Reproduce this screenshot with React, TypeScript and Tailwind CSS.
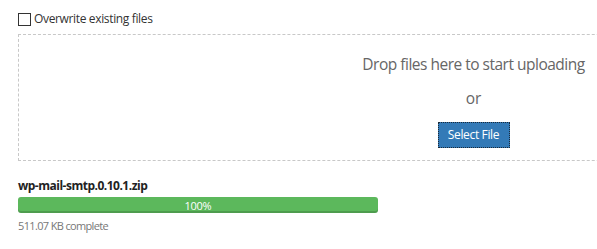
export default function App() {
  return (
    <div className="w-[597px] h-[249px] overflow-hidden bg-white font-['Open_Sans',sans-serif] text-[#333]">
      <div className="pl-[18px] pt-[11px]">
        <label className="flex items-center gap-[3px] text-[12px] leading-[16px] tracking-[-0.35px]">
          <span className="w-[13px] h-[13px] border border-[#333] bg-white shrink-0" />
          <span>Overwrite existing files</span>
        </label>

        {/* drop zone */}
        <div className="mt-[7px] w-[911px] h-[127px] border border-dashed border-[#c8c8c8] flex flex-col items-center pt-[18px]">
          <p className="text-[15.5px] leading-[22px] tracking-[-0.5px] text-[#666]">Drop files here to start uploading</p>
          <p className="mt-[12px] text-[15.5px] leading-[22px] text-[#666]">or</p>
          <button className="mt-[13px] w-[72px] h-[26px] bg-[#337ab7] text-white text-[12px] tracking-[-0.35px] outline outline-1 outline-dotted outline-[#1a2a3a] -outline-offset-1">
            Select File
          </button>
        </div>

        {/* upload item */}
        <div className="mt-[17px] w-[360px]">
          <p className="text-[12px] leading-[16px] font-bold tracking-[-0.5px] text-[#222]">wp-mail-smtp.0.10.1.zip</p>
          <div className="mt-[3px] h-[16px] rounded-[3px] bg-[#5cb85c] shadow-[inset_0_-2px_0_rgba(0,0,0,0.15)] flex items-center justify-center text-[11px] tracking-[-0.3px] text-white leading-none">
            100%
          </div>
          <p className="mt-[6px] text-[11px] leading-[14px] tracking-[-0.65px] text-[#777]">511.07 KB complete</p>
        </div>
      </div>
    </div>
  );
}
